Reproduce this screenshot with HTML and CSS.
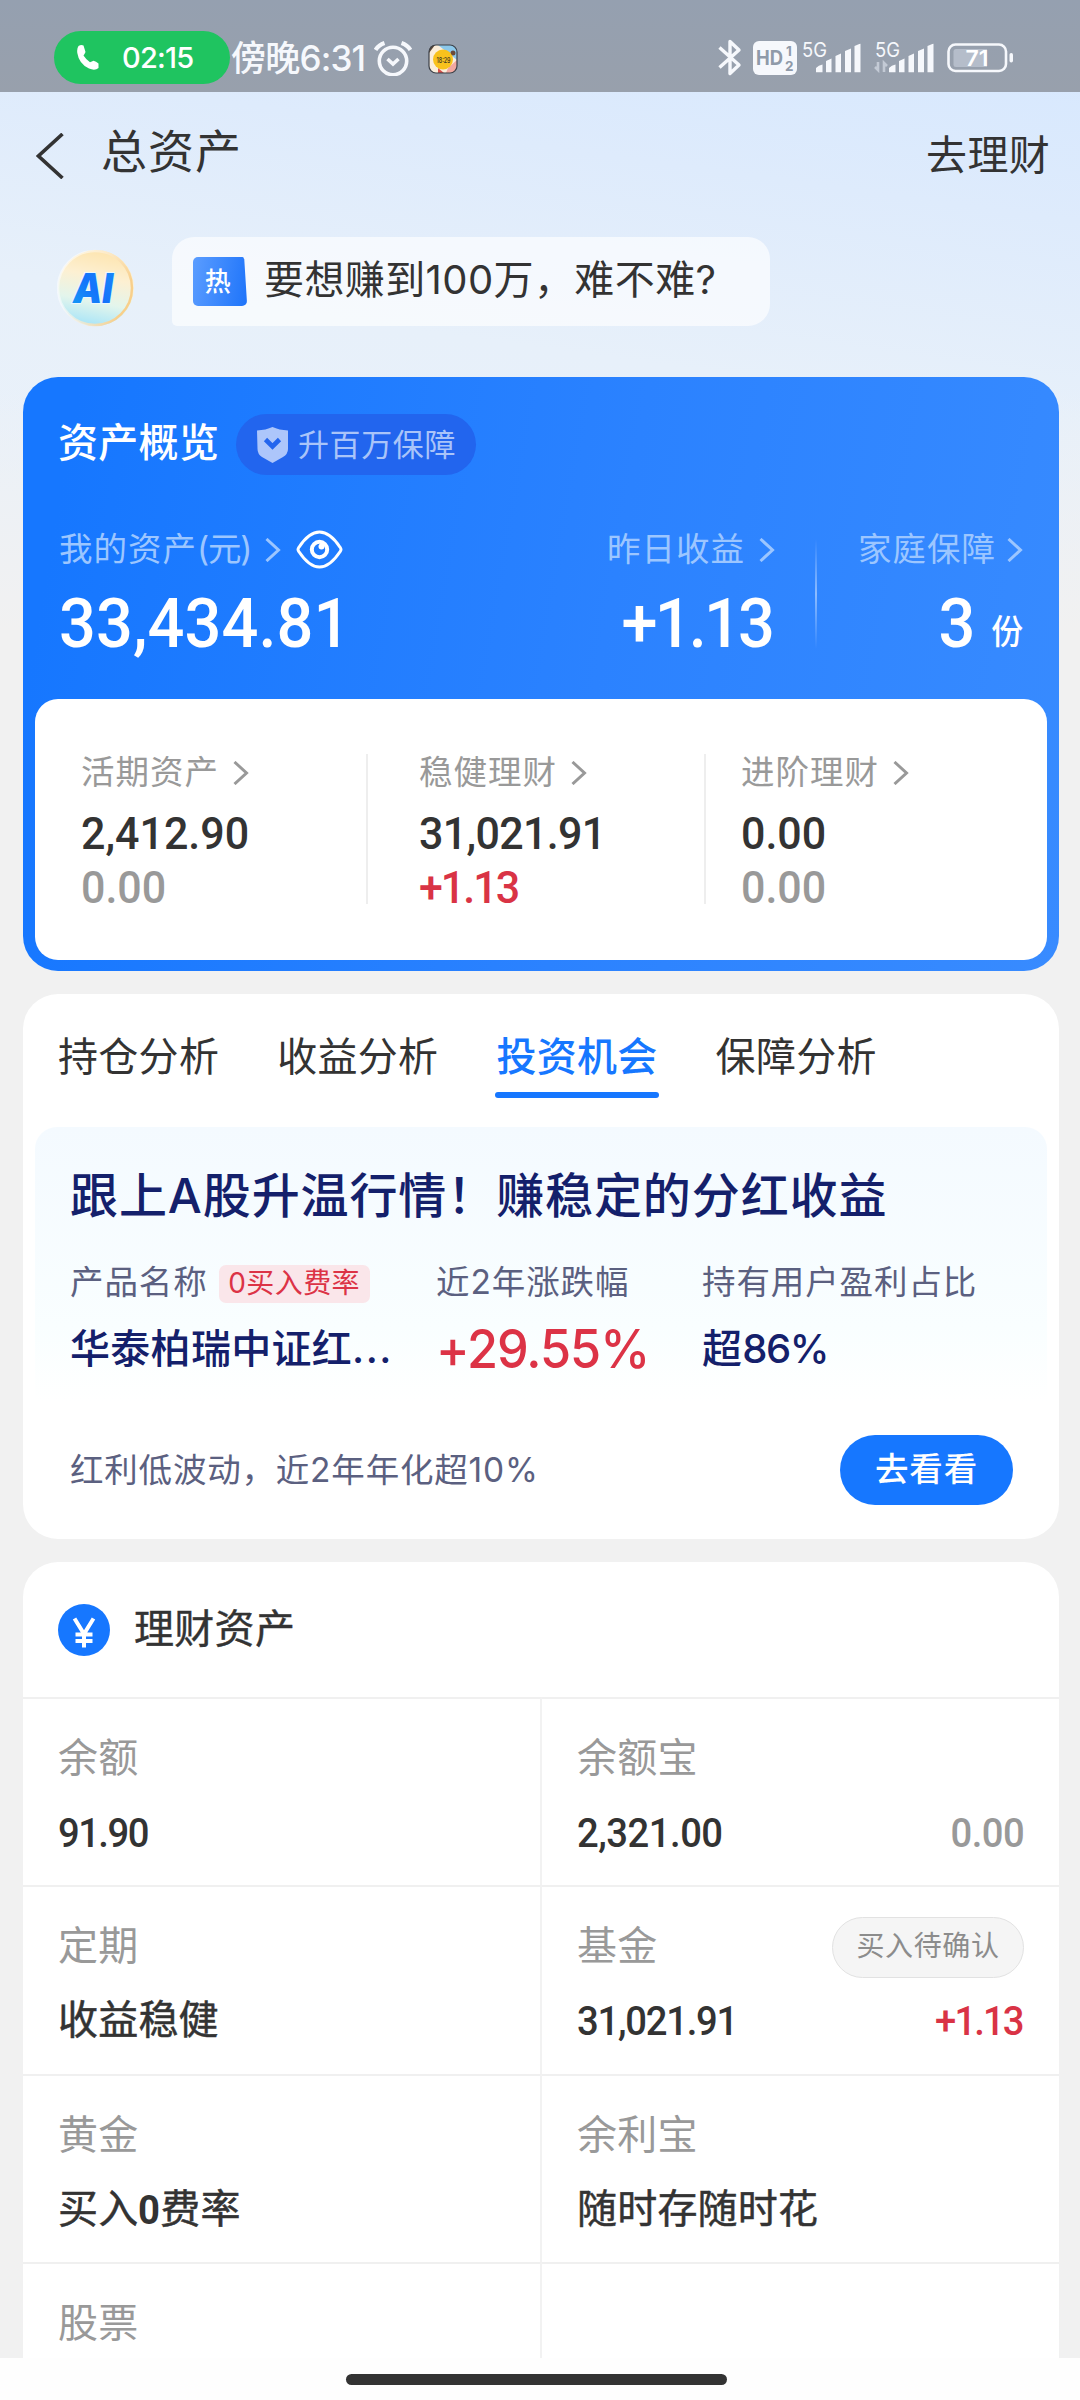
FILE: index.html
```html
<!DOCTYPE html>
<html lang="zh-CN">
<head>
<meta charset="utf-8">
<title>总资产</title>
<link rel="stylesheet" href="styles.css">
</head>
<body>
<svg width="0" height="0" class="defs">
  <symbol id="arrow" viewBox="0 0 16 24"><path d="M1.5 1 L13.5 12 L1.5 23" fill="none" stroke="currentColor" stroke-width="3"/></symbol>
  <symbol id="bars" viewBox="0 0 45 29"><path d="M0 29v-4.5q2.500-3 6.500-3.500v8zM10 29V17.500l5.500-2.500V29zM19.500 29V12.500l5.500-2.500V29zM29 29V7.500L35 5v24zM38.500 29V2.500L44.500 0v29z" fill="#f6f8fc"/></symbol>
</svg>

<div class="screen">
  <header class="status">
    <div class="call">
      <svg width="22" height="25" viewBox="0 0 22 25"><path d="M1.500 1 Q4-.5 6.500 0.500 L8.500 7 Q7.500 9 6.500 10.500 Q9 14.500 13 17.200 L16.500 15.800 Q19 16.200 21.500 18.500 L21.500 23 Q18 26 12 23.500 Q2 19 .3 8 Q-.3 3.500 1.500 1z" fill="#fff"/></svg>
      <span>02:15</span>
    </div>
    <span class="clock">傍晚6:31</span>
    <svg class="alarm" width="38" height="35" viewBox="0 0 38 35" fill="none" stroke="#f6f8fc"><circle cx="19" cy="20" r="13.700" stroke-width="3.600"/><path d="M13.500 18l5.500 5 5.500-5" stroke-width="3.600"/><path d="M1.500 9Q4.500 4 10.500 2M36.500 9Q33.500 4 27.500 2" stroke-width="4.200"/></svg>
    <svg class="sticker" width="30" height="30" viewBox="0 0 30 30"><rect x="1" y="1" width="28" height="28" rx="7" fill="#fbeedb"/><path d="M10 1h12q7 0 7 8v7z" fill="#8cc8ea"/><path d="M1 9V7q1-6 6-6z" fill="#5b4636"/><path d="M20 24l9-8v5q0 8-8 8h-3z" fill="#f2a8a0"/><circle cx="25" cy="9" r="2.500" fill="#6b4b3a"/><path d="M10 24l6 5h-6z" fill="#d94f4a"/><circle cx="15" cy="15.500" r="10" fill="#f8c21d"/><text x="8.500" y="18.500" font-size="8" font-weight="500" textLength="14" lengthAdjust="spacingAndGlyphs" fill="#3b3422">18:29</text><rect x="1" y="1" width="28" height="28" rx="7" fill="none" stroke="#3b4048" stroke-width="1.200"/></svg>
    <div class="signals">
      <svg width="24" height="37" viewBox="0 0 24 37"><path d="M1.500 8.500L21 26 12 34.500V2.500L21 11 1.500 28.500" fill="none" stroke="#f6f8fc" stroke-width="3.400" stroke-linejoin="round"/></svg>
      <svg class="hd" width="44" height="34" viewBox="0 0 44 34"><rect width="44" height="34" rx="6" fill="#f6f8fc"/><g fill="#8f9aa9" font-weight="700"><text x="3" y="23.500" font-size="20" textLength="27" lengthAdjust="spacingAndGlyphs">HD</text><text x="33" y="14.500" font-size="13.500">1</text><text x="32" y="30" font-size="13.500">2</text></g></svg>
      <svg class="net" width="60" height="38" viewBox="0 -6 60 38"><text x="0" y="15.500" font-size="20" fill="#f6f8fc" textLength="25" lengthAdjust="spacingAndGlyphs">5G</text><use href="#bars" x="14" y="2.500" width="45" height="29"/></svg>
      <svg class="net2" width="60" height="38" viewBox="0 -6 60 38"><text x="1" y="15.500" font-size="20" fill="#f6f8fc" textLength="25" lengthAdjust="spacingAndGlyphs">5G</text><path d="M4 21v8l-3-3M10 31v-9l3 3" fill="none" stroke="#c3cad5" stroke-width="2.600"/><use href="#bars" x="15" y="2.500" width="45" height="29"/></svg>
      <svg class="batt" width="68" height="30" viewBox="0 0 68 30"><rect x="1.500" y="1.500" width="57.500" height="26.500" rx="7" fill="none" stroke="#f6f8fc" stroke-width="2.600"/><path d="M9 6h31v18H9q-2.500 0-2.500-2.500v-13Q6.500 6 9 6z" fill="#b5bdca"/><rect x="62.500" y="10" width="3.500" height="9.500" rx="1.700" fill="#f6f8fc"/><text x="18.500" y="22.500" font-size="22" font-weight="600" fill="#fff" textLength="23" lengthAdjust="spacingAndGlyphs">71</text></svg>
    </div>
  </header>

  <nav class="topbar">
    <svg width="28" height="46" viewBox="0 0 28 46"><path d="M26.500 1L2.500 23l24 22" fill="none" stroke="#333" stroke-width="3.600"/></svg>
    <h1>总资产</h1>
    <span class="go">去理财</span>
  </nav>

  <section class="assistant">
    <svg width="78" height="78" viewBox="0 0 78 78">
      <defs>
        <linearGradient id="ball" x1=".6" y1="0" x2=".4" y2="1"><stop offset="0" stop-color="#fde4ae"/><stop offset=".35" stop-color="#fdf0d2"/><stop offset=".68" stop-color="#e3f5ec"/><stop offset="1" stop-color="#a6e4f8"/></linearGradient>
        <linearGradient id="rim" x1="0" y1="0" x2="1" y2=".4"><stop offset=".3" stop-color="#fff" stop-opacity=".5"/><stop offset="1" stop-color="#f8cf8b"/></linearGradient>
        <linearGradient id="aitext" x1="0" y1="1" x2="1" y2="0"><stop offset="0" stop-color="#12a0f5"/><stop offset=".5" stop-color="#1573fb"/><stop offset="1" stop-color="#188bf8"/></linearGradient>
      </defs>
      <circle cx="39" cy="39" r="38" fill="url(#ball)"/><circle cx="38" cy="39" r="37" fill="none" stroke="url(#rim)" stroke-width="2.500"/>
      <text x="16" y="54" font-size="41" font-weight="900" font-style="italic" fill="url(#aitext)" stroke="#e8f8ff" stroke-width="2" paint-order="stroke" textLength="40" lengthAdjust="spacingAndGlyphs">AI</text>
    </svg>
    <div class="bubble">
      <span class="hot">热</span>
      <span class="ask">要想赚到100万，难不难?</span>
    </div>
  </section>

  <section class="overview">
    <div class="ov-head">
      <h2>资产概览</h2>
      <div class="shield"><svg width="31" height="36" viewBox="0 0 31 36"><path d="M15.500 0Q22 3 31 3.500V22q0 5-5 8l-10.500 6L5 30Q.5 27 .5 22L0 3.500Q9 3 15.500 0z" fill="#adc6fb"/><path d="M8.500 12.500l7 7 7-7" fill="none" stroke="#2365ee" stroke-width="4.600"/></svg><span>升百万保障</span></div>
    </div>
    <div class="totals">
      <div class="total mine">
        <p class="lab">我的资产<span class="unit">(元)</span><svg class="arr"><use href="#arrow"/></svg><svg class="eye" width="47" height="39" viewBox="0 0 47 39" fill="none" stroke="#fff"><path d="M2 19.500Q2 18.500 3 17.200Q13 2 23.500 2T44 17.200Q45 18.500 45 19.500T44 21.800Q34 37 23.500 37T3 21.800Q2 20.500 2 19.500z" stroke-width="3"/><circle cx="23.500" cy="19.500" r="7.700" stroke-width="4"/><circle cx="25.500" cy="16.500" r="3" fill="#fff" stroke="none"/></svg></p>
        <p class="big">33,434.81</p>
      </div>
      <div class="total yday"><p class="lab">昨日收益<svg class="arr"><use href="#arrow"/></svg></p><p class="big tight">+1.13</p></div>
      <i class="bar"></i>
      <div class="total family"><p class="lab">家庭保障<svg class="arr"><use href="#arrow"/></svg></p><p class="big">3<small>份</small></p></div>
    </div>
    <div class="split">
      <div class="part"><p class="lab">活期资产<svg class="arr"><use href="#arrow"/></svg></p><p class="mid">2,412.90</p><p class="mid grey">0.00</p></div>
      <div class="part"><p class="lab">稳健理财<svg class="arr"><use href="#arrow"/></svg></p><p class="mid ones">31,021.91</p><p class="mid red">+1.13</p></div>
      <div class="part"><p class="lab">进阶理财<svg class="arr"><use href="#arrow"/></svg></p><p class="mid">0.00</p><p class="mid grey">0.00</p></div>
    </div>
  </section>

  <section class="card analysis">
    <div class="tabs"><span>持仓分析</span><span>收益分析</span><span class="on">投资机会</span><span>保障分析</span></div>
    <div class="promo">
      <h3>跟上A股升温行情！赚稳定的分红收益</h3>
      <div class="facts">
        <div><p class="k">产品名称<em>0买入费率</em></p><p class="v">华泰柏瑞中证红<span class="dots">...</span></p></div>
        <div><p class="k">近2年涨跌幅</p><p class="v rise">+29.55%</p></div>
        <div><p class="k">持有用户盈利占比</p><p class="v">超<span class="pct">86%</span></p></div>
      </div>
      <div class="more"><span>红利低波动，近2年年化超10%</span><a>去看看</a></div>
    </div>
  </section>

  <section class="card wealth">
    <div class="w-head"><svg width="52" height="52" viewBox="0 0 52 52"><circle cx="26" cy="26" r="26" fill="#1677ff"/><path d="M16.500 14.500L26 30 35.500 14.500M26 29v14.500M17.500 30.500h17M17.500 37h17" fill="none" stroke="#fff" stroke-width="4"/></svg><h2>理财资产</h2></div>
    <div class="grid">
      <div class="cell"><p class="name">余额</p><p class="val"><b class="ones">91.90</b></p></div>
      <div class="cell"><p class="name">余额宝</p><p class="val"><b>2,321.00</b><b class="grey">0.00</b></p></div>
      <div class="cell"><p class="name">定期</p><p class="val">收益稳健</p></div>
      <div class="cell"><p class="name">基金<span class="wait">买入待确认</span></p><p class="val"><b class="long">31,021.91</b><b class="red">+1.13</b></p></div>
      <div class="cell"><p class="name">黄金</p><p class="val">买入<b class="zero">0</b>费率</p></div>
      <div class="cell"><p class="name">余利宝</p><p class="val">随时存随时花</p></div>
      <div class="cell"><p class="name">股票</p></div>
      <div class="cell"></div>
    </div>
  </section>
  <footer class="home"><i></i></footer>
</div>
</body>
</html>
```
FILE: styles.css
```css
* { box-sizing: border-box; margin: 0; padding: 0; }
body { width: 1080px; height: 2400px; overflow: hidden; font-family: Inter, "Noto Sans CJK SC", sans-serif; color: #333; }
h1, h2, h3 { font-weight: 400; }
svg { display: block; flex: none; }
.defs { position: absolute; }
.screen {
  height: 2400px; display: flex; flex-direction: column; overflow: hidden;
  background:
    linear-gradient(180deg, rgba(241,241,241,0) 0, rgba(241,241,241,0) 390px, #f1f1f1 630px),
    linear-gradient(188deg, #d7e8fe 60px, #deebfc 220px, #e7f0fa 420px, #eaf1f9 640px);
}
.status { height: 92px; flex: none; display: flex; align-items: flex-start; background: linear-gradient(180deg, #95a0b0, #98a0ac); color: #f6f8fc; }
.call { width: 176px; height: 53px; margin: 31px 0 0 54px; padding-left: 23px; border-radius: 27px; background: #1fc460; display: flex; align-items: center; gap: 23px; color: #fff; }
.call span { font-size: 29px; font-weight: 500; letter-spacing: -0.8px; }
.clock { margin: 37px 0 0 1px; height: 42px; line-height: 42px; font-size: 35px; font-weight: 500; letter-spacing: -0.8px; white-space: nowrap; width: 142px; }
.alarm { margin: 41px 0 0 1px; }
.sticker { margin: 44px 0 0 16px; }
.signals { margin: 39px 65px 0 auto; display: flex; align-items: flex-start; }
.hd { margin: 2px 0 0 11px; }
.net { margin: -4px 0 0 5px; }
.net2 { margin: -4px 0 0 12px; }
.batt { margin: 4px 0 0 13px; }

.topbar { height: 145px; flex: none; display: flex; padding: 41px 30px 0 36px; }
.topbar h1 { margin-left: 37px; height: 48px; margin-top: -6px; line-height: 48px; font-size: 46px; letter-spacing: 1px; }
.topbar .go { margin: 0 0 0 auto; height: 44px; line-height: 44px; font-size: 41px; letter-spacing: 0.3px; }
.assistant { height: 140px; flex: none; display: flex; padding-left: 57px; }
.assistant > svg { margin-top: 12px; }
.bubble { margin-left: 37px; width: 598px; height: 89px; border-radius: 22px 22px 22px 5px; background: rgba(255,255,255,.64); padding-left: 21px; display: flex; align-items: center; font-size: 40px; letter-spacing: 0.4px; white-space: nowrap; line-height: 50px; }
.ask { margin-top: -3px; }
.hot { width: 54px; height: 49px; margin-right: 17px; padding-right: 4px; text-align: center; line-height: 49px; font-size: 26px; font-weight: 500; color: #fff; background: linear-gradient(100deg, #5b9dff, #1e74fa); border-radius: 5px; clip-path: polygon(0 0, 93% 0, 95% 5%, 100% 95%, 99% 100%, 0 100%); }

.overview { height: 594px; flex: none; margin: 0 21px 0 23px; border-radius: 35px; background: linear-gradient(100deg, #1677ff 5%, #2b82ff 55%, #388bff 100%); padding: 37px 12px 11px; color: #fff; display: flex; flex-direction: column; }
.ov-head { height: 61px; display: flex; align-items: center; padding-left: 23px; }
.ov-head h2 { font-size: 40px; font-weight: 500; letter-spacing: 0.3px; width: 178px; line-height: 50px; margin-top: -4px; }
.shield { width: 240px; height: 61px; border-radius: 31px; background: #2265ee; padding-left: 21px; display: flex; align-items: center; gap: 10px; font-size: 31px; letter-spacing: 0.6px; color: #a9c4f9; white-space: nowrap; }
.shield span { margin-top: -4px; }
.totals { height: 224px; display: flex; padding: 52px 24px 0; }
.lab { height: 44px; line-height: 44px; font-size: 33.500px; letter-spacing: 1px; display: flex; align-items: center; white-space: nowrap; }
.totals .lab { color: #9cc6ff; }
.unit { letter-spacing: -1.200px; }
.arr { width: 16px; height: 24px; margin-left: 14px; margin-top: 2px; }
.eye { margin-left: 15px; margin-top: 1px; }
.big { margin-top: 20px; height: 66px; line-height: 66px; font-family: Roboto, "Noto Sans CJK SC", sans-serif; font-size: 69px; font-weight: 500; letter-spacing: 0.100px; white-space: nowrap; transform: scaleX(.94); transform-origin: left; }
.big.tight { letter-spacing: -3px; margin-right: 3px; transform-origin: right; }
.total { display: flex; flex-direction: column; }
.mine { width: 450px; }
.yday { width: 266px; align-items: flex-end; }
.bar { width: 2px; height: 110px; margin: 12px 0 0 40px; background: linear-gradient(180deg, rgba(255,255,255,0), rgba(255,255,255,.45) 50%, rgba(255,255,255,0)); }
.family { margin-left: auto; align-items: flex-end; }
.family .arr { margin-left: 11px; }
.family .big { transform-origin: right; }
.big small { font-size: 34px; margin-left: 17px; letter-spacing: 0; position: relative; top: -3px; }
.split { height: 261px; border-radius: 23px; background: #fff; display: flex; padding: 0; color: #333; }
.part { padding: 51px 0 0 46px; width: 331px; position: relative; }
.part:nth-child(2) { width: 338px; padding-left: 53px; }
.part:nth-child(3) { padding-left: 37px; }
.part + .part::before { content: ""; position: absolute; left: 0; top: 55px; width: 2px; height: 150px; background: #eee; }
.split .lab { color: #999; }
.mid { font-family: Roboto, sans-serif; font-weight: 500; font-size: 45px; height: 54px; line-height: 54px; letter-spacing: 0; white-space: nowrap; transform: scaleX(.955); transform-origin: left; }
.split .lab + .mid { margin-top: 13px; }
.mid.ones { letter-spacing: -0.700px; }
.grey { color: #999; }
.red { color: #d93345; }
.mid.red { letter-spacing: -2.100px; }

.card { margin: 23px 21px 0 23px; border-radius: 35px; background: #fff; flex: none; }
.analysis { height: 545px; padding: 0 12px; }
.tabs { height: 133px; padding: 37px 0 0 23px; display: flex; gap: 58px; }
.tabs span { font-size: 40px; letter-spacing: 0.300px; height: 67px; line-height: 52px; white-space: nowrap; position: relative; }
.tabs .on { color: #1677ff; font-weight: 500; }
.tabs .on::after { content: ""; position: absolute; left: -1px; right: -1px; bottom: 0; height: 6px; border-radius: 3px; background: #1677ff; }
.promo { padding: 39px 34px 0 35px; height: 400px; border-radius: 22px; background: linear-gradient(180deg, #f4faff 0, #f9feff 200px, #fff 275px); }
.promo h3 { font-size: 48px; letter-spacing: 0.900px; line-height: 60px; height: 60px; font-weight: 500; color: #14206b; white-space: nowrap; }
.facts { margin-top: 34px; display: grid; grid-template-columns: 366px 266px 1fr; white-space: nowrap; }
.k { height: 44px; line-height: 44px; font-size: 33.500px; letter-spacing: 0.900px; color: #5b6080; display: flex; align-items: center; }
.k em { margin: 3px 0 0 11px; height: 38px; line-height: 37px; width: 151px; text-align: center; font-style: normal; font-size: 28px; letter-spacing: 0.400px; color: #dc3346; background: #fae6ea; border-radius: 7px; }
.v { margin-top: 19px; height: 52px; line-height: 52px; font-size: 40px; letter-spacing: 0.300px; font-weight: 500; color: #14206b; }
.dots { letter-spacing: 1.400px; }
.pct { letter-spacing: -1.500px; }
.rise { color: #dc3346; font-size: 53px; letter-spacing: -1.100px; transform: scaleX(.95); transform-origin: left; }
.more { margin-top: 60px; height: 70px; display: flex; align-items: center; justify-content: space-between; font-size: 33.500px; letter-spacing: 0.900px; color: #5b6080; }
.more span { margin-top: -5px; letter-spacing: 0.800px; }
.more a { width: 173px; height: 70px; line-height: 68px; border-radius: 35px; background: #1677ff; color: #fff; text-align: center; font-weight: 500; }

.wealth { height: 796px; border-radius: 35px 35px 0 0; overflow: hidden; }
.w-head { height: 135px; padding: 42px 0 0 35px; display: flex; }
.w-head h2 { margin: -1px 0 0 24px; font-size: 40px; height: 52px; line-height: 52px; letter-spacing: 0.300px; -webkit-text-stroke: 0.400px #333; }
.grid { display: grid; grid-template-columns: 519px 517px; grid-auto-rows: 188.400px; }
.cell { border-top: 2px solid #f0f0f0; padding: 33px 35px 0; }
.cell:nth-child(odd) { border-right: 2px solid #f2f2f2; }
.name { height: 52px; line-height: 52px; font-size: 40px; letter-spacing: 0.300px; color: #999; display: flex; justify-content: space-between; align-items: center; }
.val { margin-top: 22px; height: 52px; line-height: 52px; font-size: 40px; letter-spacing: 0.200px; -webkit-text-stroke: 0.500px #333; display: flex; }
.val b { font: 500 40px/55px Roboto, sans-serif; letter-spacing: -0.500px; -webkit-text-stroke: 0; transform: scaleX(.955); transform-origin: left; }
.val b.ones { letter-spacing: -1.600px; }
.val b.long { letter-spacing: -1.300px; }
.val b + b { margin-left: auto; transform-origin: right; }
.val b.red { letter-spacing: -2px; margin-right: 1px; }
.val b.zero { font-weight: 700; letter-spacing: 0; margin-right: -1px; }
.wait { width: 192px; height: 61px; line-height: 57px; margin-top: 2px; text-align: center; border: 1.500px solid #e2e2e2; border-radius: 31px; background: #f5f5f5; font-size: 28px; letter-spacing: 0.600px; color: #8c8c8c; }
.home { flex: 1; background: #fefefe; padding-top: 16px; }
.home i { display: block; width: 381px; height: 11px; border-radius: 6px; background: #333; margin-left: 346px; }
```
